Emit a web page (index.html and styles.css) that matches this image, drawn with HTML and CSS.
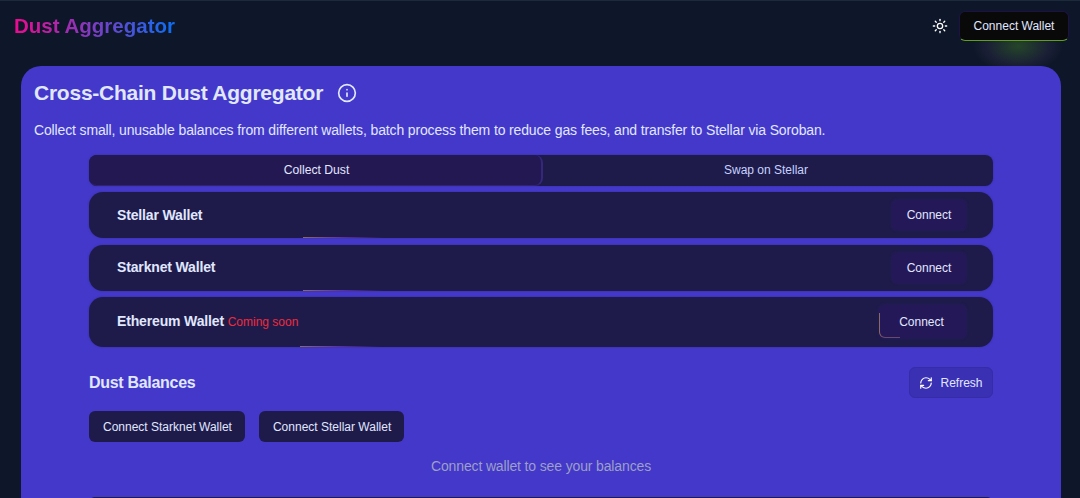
FILE: index.html
```html
<!DOCTYPE html>
<html lang="en">
<head>
<meta charset="utf-8">
<title>Dust Aggregator</title>
<link rel="stylesheet" href="styles.css">
</head>
<body>
<header class="topbar">
  <span class="brand">Dust Aggregator</span>
  <div class="top-actions">
    <svg class="sun" viewBox="0 0 24 24" fill="none" stroke="currentColor" stroke-width="2" stroke-linecap="round" stroke-linejoin="round"><circle cx="12" cy="12" r="4"/><path d="M12 2v2"/><path d="M12 20v2"/><path d="m4.93 4.93 1.41 1.41"/><path d="m17.66 17.66 1.41 1.41"/><path d="M2 12h2"/><path d="M20 12h2"/><path d="m6.34 17.66-1.41 1.41"/><path d="m19.07 4.93-1.41 1.41"/></svg>
    <div class="wallet-wrap">
      <span class="glow"></span>
      <button class="wallet-btn">Connect Wallet</button>
    </div>
  </div>
</header>
<main class="card">
  <div class="title-row">
    <h1 class="title">Cross-Chain Dust Aggregator</h1>
    <svg class="info" viewBox="0 0 24 24" fill="none" stroke="currentColor" stroke-width="2" stroke-linecap="round" stroke-linejoin="round"><circle cx="12" cy="12" r="10"/><path d="M12 16v-4"/><path d="M12 8h.01"/></svg>
  </div>
  <p class="lead">Collect small, unusable balances from different wallets, batch process them to reduce gas fees, and transfer to Stellar via Soroban.</p>
  <div class="content">
    <div class="tabs">
      <button class="tab tab-active">Collect Dust</button>
      <button class="tab tab-idle">Swap on Stellar</button>
    </div>
    <div class="row">
      <div class="row-label">Stellar Wallet</div>
      <button class="connect">Connect</button>
      <span class="streak"></span>
    </div>
    <div class="row">
      <div class="row-label row-label-up">Starknet Wallet</div>
      <button class="connect">Connect</button>
      <span class="streak"></span>
    </div>
    <div class="row row-tall">
      <div class="row-label row-label-up">Ethereum Wallet <span class="soon">Coming soon</span></div>
      <button class="connect connect-wide">Connect</button>
      <span class="streak streak-low"></span>
    </div>
    <div class="balances-head">
      <h2 class="balances-title">Dust Balances</h2>
      <button class="refresh">
        <svg class="refresh-icon" viewBox="0 0 24 24" fill="none" stroke="currentColor" stroke-width="2" stroke-linecap="round" stroke-linejoin="round"><path d="M3 12a9 9 0 0 1 9-9 9.75 9.75 0 0 1 6.74 2.74L21 8"/><path d="M21 3v5h-5"/><path d="M21 12a9 9 0 0 1-9 9 9.75 9.75 0 0 1-6.74-2.74L3 16"/><path d="M8 16H3v5"/></svg>
        Refresh
      </button>
    </div>
    <div class="connect-list">
      <button class="dark-btn">Connect Starknet Wallet</button>
      <button class="dark-btn">Connect Stellar Wallet</button>
    </div>
    <p class="empty">Connect wallet to see your balances</p>
    <div class="next-panel"></div>
  </div>
</main>
</body>
</html>
```
FILE: styles.css
```css
* { box-sizing: border-box; }
html, body { margin: 0; height: 498px; overflow: hidden; }
body {
  background: #0e1729;
  color: #e0e7ff;
  font-family: "Liberation Sans", Arial, sans-serif;
  border-top: 1px solid #1c2a3a;
}
button { font-family: inherit; cursor: pointer; }
.topbar {
  height: 65px;
  padding: 10px 11px 0 14px;
  display: flex;
  justify-content: space-between;
  align-items: flex-start;
}
.brand {
  margin-top: 3px;
  font-size: 20.5px;
  line-height: 24px;
  font-weight: 700;
  background: linear-gradient(90deg, #ec0a8e, #0a70f5);
  -webkit-background-clip: text;
  background-clip: text;
  color: transparent;
}
.top-actions { display: flex; align-items: center; gap: 11px; height: 30px; }
.sun { width: 16px; height: 16px; color: #fff; }
.wallet-wrap { position: relative; }
.glow {
  position: absolute;
  left: 14px;
  top: 8px;
  width: 90px;
  height: 54px;
  border-radius: 50%;
  background: radial-gradient(closest-side, rgba(70, 140, 40, .4), rgba(90, 70, 120, .16) 70%, transparent);
}
.wallet-btn {
  position: relative;
  display: block;
  width: 110px;
  height: 30px;
  border: 1px solid #1e1245;
  border-bottom: 1px solid #5f9e1e;
  border-radius: 6px;
  background: #090909;
  color: #e0e7ff;
  font-size: 12px;
  padding: 0;
}
.card {
  position: relative;
  margin: 0 19px 0 21px;
  height: 432px;
  padding: 14px 13px 0;
  overflow: hidden;
  background: #4338ca;
  border-radius: 20px 20px 0 0;
}
.title-row { display: flex; align-items: center; gap: 14px; height: 26px; }
.title { margin: 0; font-size: 21px; line-height: 26px; font-weight: 700; letter-spacing: -.24px; color: #e0e7ff; }
.info { width: 20px; height: 20px; color: #e0e7ff; }
.lead { margin: 15px 0 0; font-size: 14px; line-height: 18px; letter-spacing: -.14px; color: #e0e7ff; }
.content { width: 904px; margin: 16px 0 0 55px; }
.tabs {
  display: grid;
  grid-template-columns: 454px 1fr;
  height: 31px;
  border-radius: 8px;
  background: #1e1b4b;
  box-shadow: 0 0 2px rgba(49, 46, 129, .8);
}
.tab {
  border: 0;
  background: transparent;
  color: #c7d2fe;
  font-size: 12px;
  border-radius: 8px;
  padding: 0;
}
.tab-idle { padding: 0 4px 1px 0; }
.tab-active {
  background: #241853;
  color: #e0e7ff;
  font-size: 12.2px;
  padding-left: 3px;
  border-right: 2px solid #33287a;
  border-bottom: 1px solid #2f2372;
}
.row {
  position: relative;
  display: flex;
  align-items: center;
  justify-content: space-between;
  height: 45.5px;
  margin-top: 6px;
  padding: 0 27px 0 28px;
  border-radius: 14px;
  background: #1e1b4b;
  box-shadow: 0 0 2px rgba(49, 46, 129, .8);
}
.row + .row { margin-top: 7.5px; }
.row-tall { height: 49.5px; margin-top: 6.5px !important; }
.row-label { font-size: 14px; font-weight: 700; letter-spacing: -.15px; color: #e0e7ff; }
.row-label-up { padding-bottom: 2px; }
.soon { font-size: 12px; font-weight: 400; letter-spacing: 0; color: #ef2b3c; }
.connect {
  position: relative;
  width: 74px;
  height: 30px;
  border: 0;
  border-radius: 6px;
  background: #251858;
  color: #e0e7ff;
  font-size: 12px;
  box-shadow: 0 0 3px #2a1e66;
  padding: 0;
}
.connect-wide {
  width: 87px;
  height: 33px;
  padding-right: 2px;
}
.connect-wide::after {
  content: "";
  position: absolute;
  left: 0;
  bottom: 0;
  width: 20px;
  height: 24px;
  border-left: 1px solid #8a6a5c;
  border-bottom: 1px solid #6a4a6c;
  border-bottom-left-radius: 6px;
}
.streak {
  position: absolute;
  left: 214px;
  bottom: 0;
  width: 80px;
  height: 1px;
  background: linear-gradient(90deg, #8a6a6a, #5b2f9e 50%, transparent);
}
.streak-low { left: 211px; }
.balances-head {
  display: flex;
  align-items: center;
  justify-content: space-between;
  margin-top: 20.5px;
  height: 31px;
}
.balances-title { margin: 0; font-size: 16px; font-weight: 700; letter-spacing: -.3px; color: #e0e7ff; }
.refresh {
  display: flex;
  align-items: center;
  justify-content: center;
  gap: 7px;
  width: 84px;
  height: 31px;
  padding: 0;
  border: 1px solid #352ca6;
  border-radius: 6px;
  background: #3a30b4;
  color: #e0e7ff;
  font-size: 12px;
}
.refresh-icon { width: 14px; height: 14px; color: #fff; }
.connect-list { display: flex; gap: 14px; margin-top: 13px; }
.dark-btn {
  height: 31px;
  padding: 0 13px 0 14px;
  border: 0;
  border-radius: 6px;
  background: #1e1b4b;
  color: #e0e7ff;
  font-size: 12px;
}
.empty { margin: 15px 0 0; text-align: center; font-size: 14px; line-height: 18px; letter-spacing: -.14px; color: #9c9fc6; }
.next-panel { height: 12px; margin-top: 22px; border-radius: 14px; background: #1e1b4b; }
```
